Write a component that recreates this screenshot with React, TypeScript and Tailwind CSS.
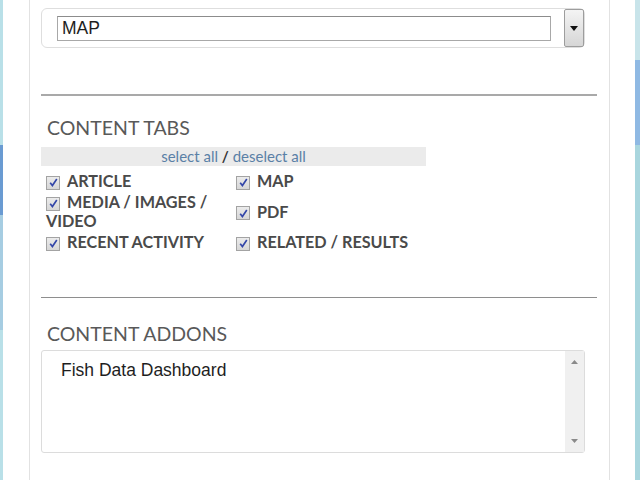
import React from "react";

const tabs = [
  ["ARTICLE", "MAP"],
  ["MEDIA / IMAGES / VIDEO", "PDF"],
  ["RECENT ACTIVITY", "RELATED / RESULTS"],
];

function Check() {
  return (
    <span className="inline-flex w-[14px] h-[14px] mr-[7px] align-[-1px] items-center justify-center border border-[#a3a3a3] bg-gradient-to-b from-[#ececec] to-[#d6d6d6]">
      <svg width="11" height="11" viewBox="0 0 10 10">
        <path d="M2 5.2 L4 7.8 L8 1.8" fill="none" stroke="#3346a8" strokeWidth="1.5" />
      </svg>
    </span>
  );
}

function Item({ label }: { label: string }) {
  return (
    <div className="text-[16.2px] leading-[19px] font-bold text-[#4a4a4a]">
      <Check />
      {label}
    </div>
  );
}

export default function App() {
  return (
    <div className="w-[640px] h-[480px] flex bg-white overflow-hidden" style={{ fontFamily: "Lato, 'Noto Sans', sans-serif" }}>
      {/* left edge of page behind */}
      <div className="w-[3px] flex flex-col">
        <div className="h-[145px] bg-[#b9e0e8]" />
        <div className="h-[70px] bg-[#6a9bd2]" />
        <div className="h-[115px] bg-[#a6cde2]" />
        <div className="flex-1 bg-[#b9e0e8]" />
      </div>
      <div className="w-[26px]" />

      {/* panel */}
      <div className="w-[581px] border-l border-r border-[#e2e2e2] pl-[11px] pr-[12px] pt-[8px]">
        <div className="w-[544px] h-[40px] flex items-center border border-[#dedede] rounded-md pl-[15px]">
          <div className="w-[494px] h-[25px] border border-[#a8a8a8] border-t-[#8c8c8c] flex items-center pl-[4px] text-[17.5px] text-[#1e1e1e]" style={{ fontFamily: "'Liberation Sans', Arial, sans-serif" }}>
            MAP
          </div>
          <div className="ml-auto w-[20px] h-[38px] border border-[#9d9d9d] rounded-[2px] bg-gradient-to-b from-[#f4f4f4] to-[#d6d6d6] flex items-center justify-center">
            <svg width="8" height="5" viewBox="0 0 8 5">
              <path d="M0 0 H8 L4 5 Z" fill="#111" />
            </svg>
          </div>
        </div>

        <div className="mt-[46px] h-[2px] bg-[#a9a9a9]" />

        <div className="mt-[21px] ml-[6px] text-[19.5px] leading-[22px] text-[#595959]">CONTENT TABS</div>

        <div className="mt-[8px] w-[385px] h-[19px] bg-[#ebebeb] text-center text-[15px] leading-[19px] text-[#5a80a6]">
          select all <span className="text-[#333] font-bold">/</span> deselect all
        </div>

        <div className="mt-[5px] pl-[5px] grid grid-cols-[190px_220px] gap-y-[2px] items-center">
          {tabs.map(([a, b]) => (
            <React.Fragment key={a}>
              <Item label={a} />
              <Item label={b} />
            </React.Fragment>
          ))}
        </div>

        <div className="mt-[46px] h-[1px] bg-[#8e8e8e]" />

        <div className="mt-[25px] ml-[6px] text-[19.5px] leading-[22px] text-[#595959]">CONTENT ADDONS</div>

        <div className="mt-[5px] w-[544px] h-[103px] flex border border-[#dcdcdc] rounded-[3px]">
          <div className="flex-1 pl-[19px] pt-[6px] text-[17.5px] text-[#1e1e1e]" style={{ fontFamily: "'Liberation Sans', Arial, sans-serif" }}>
            Fish Data Dashboard
          </div>
          <div className="w-[19px] bg-[#f0f0f0] flex flex-col items-center justify-between py-[9px]">
            <svg width="7" height="4" viewBox="0 0 7 4">
              <path d="M0 4 L3.5 0 L7 4 Z" fill="#8a8a8a" />
            </svg>
            <svg width="7" height="4" viewBox="0 0 7 4">
              <path d="M0 0 H7 L3.5 4 Z" fill="#8a8a8a" />
            </svg>
          </div>
        </div>
      </div>

      <div className="w-[25px]" />
      {/* right edge of page behind */}
      <div className="w-[5px] flex flex-col">
        <div className="h-[60px] bg-[#c8e4ea]" />
        <div className="h-[85px] bg-[#8fb9e3]" />
        <div className="flex-1 bg-[#a9d6de]" />
      </div>
    </div>
  );
}
